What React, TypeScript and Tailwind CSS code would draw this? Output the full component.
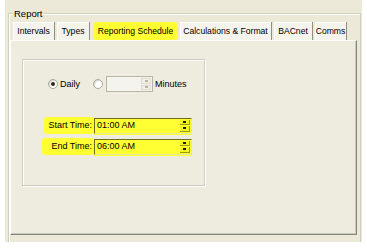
import React from "react"

const tabs = [
  { label: "Intervals", w: 42, ml: 0 },
  { label: "Types", w: 33, ml: 2 },
  { label: "Reporting Schedule", w: 85, ml: 3, active: true },
  { label: "Calculations & Format", w: 92, ml: 2 },
  { label: "BACnet", w: 39, ml: 2 },
  { label: "Comms", w: 32, ml: 2 }
]

const Radio = ({ checked }: { checked?: boolean }) => (
  <span className="flex h-[10px] w-[10px] items-center justify-center rounded-full border border-[#a9a89c] bg-white shadow-[inset_1px_1px_1px_#d6d4c8]">
    {checked && <span className="h-[4px] w-[4px] rounded-full bg-[#2a2a20]" />}
  </span>
)

const SpinButtons = ({ yellow }: { yellow?: boolean }) => (
  <div className="flex w-[11px] flex-col gap-[1px] py-[1px] pr-[1px]">
    {[0, 1].map(i => (
      <div
        key={i}
        className={
          yellow
            ? "flex h-[6px] items-center justify-center border-b border-r border-[#9a9a20] border-l-[#ffff90] border-t-[#ffff90] bg-[#f2f21c]"
            : "flex h-[6px] items-center justify-center border border-[#dedcd0] bg-[#f1efe6]"
        }>
        <span
          className={
            (yellow ? "bg-[#202000] " : "bg-[#b8b6aa] ") +
            "h-[2px] w-[3px]"
          }
        />
      </div>
    ))}
  </div>
)

const TimeRow = ({ label, value, labelClass }: { label: string; value: string; labelClass: string }) => (
  <div className="flex items-center">
    <div className="flex w-[71px] justify-end">
      <span className={"rounded-[3px] bg-[#ffff33] py-[4px] " + labelClass}>{label}</span>
    </div>
    <div className="flex h-[16px] w-[98px] items-stretch border border-b-[#e8e8a0] border-l-[#6e6e18] border-r-[#e8e8a0] border-t-[#6e6e18] bg-[#ffff33] shadow-[0_1px_0_#ffff33]">
      <span className="flex flex-1 items-center pl-[2px]">{value}</span>
      <SpinButtons yellow />
    </div>
  </div>
)

export default function App() {
  return (
    <div className="h-[248px] w-[367px] bg-white font-['Liberation_Sans',Arial,sans-serif] text-[9px] leading-none text-black">
      <div className="ml-[5px] h-[242px] w-[357px] overflow-hidden bg-[#ece9d8] pt-[13px]">
        <div className="relative ml-[3px] h-[240px] w-[353px] border-l border-r border-t border-[#d0d0bf] shadow-[inset_1px_1px_0_#fff]">
          <span className="absolute left-[4px] top-[-5px] bg-[#ece9d8] px-[1px] text-[9.5px]">Report</span>
          <div className="ml-[4px] mt-[8px] flex h-[18px] text-[8.6px]">
            {tabs.map(t => (
              <div
                key={t.label}
                style={{ width: t.w, marginLeft: t.ml }}
                className={
                  t.active
                    ? "flex items-center justify-center whitespace-nowrap rounded-[4px] bg-[#ffff33] pt-[1px]"
                    : "flex items-center justify-center whitespace-nowrap border-r border-[#8f8f86] bg-[#f4f3ec] pt-[1px] shadow-[inset_1px_1px_0_#fff]"
                }>
                {t.label}
              </div>
            ))}
          </div>
          <div className="ml-[1px] h-[195px] w-[347px] border-b border-l border-r border-t border-b-[#858580] border-l-white border-r-[#858580] border-t-[#fcfcf8] bg-[#eeebdf] shadow-[inset_-1px_-1px_0_#cbc9bb]">
            <div className="ml-[11px] mt-[18px] h-[127px] w-[183px] border border-[#cfcdbf] shadow-[inset_1px_1px_0_#fff,1px_1px_0_#fff] pt-[16px]">
              <div className="flex h-[16px] items-center">
                <span className="ml-[25px]">
                  <Radio checked />
                </span>
                <span className="ml-[2px]">Daily</span>
                <span className="ml-[13px]">
                  <Radio />
                </span>
                <div className="ml-[3px] flex h-[16px] w-[47px] items-stretch border border-[#b7b5a8] bg-[#f4f3ee]">
                  <span className="flex-1" />
                  <SpinButtons />
                </div>
                <span className="ml-[2px]">Minutes</span>
              </div>
              <div className="mt-[25px] flex flex-col gap-[4px]">
                <TimeRow label="Start Time:" value="01:00 AM" labelClass="pl-[4px] pr-[2px]" />
                <TimeRow label="End Time:" value="06:00 AM" labelClass="pl-[9px] pr-[2px]" />
              </div>
            </div>
          </div>
        </div>
      </div>
    </div>
  )
}
